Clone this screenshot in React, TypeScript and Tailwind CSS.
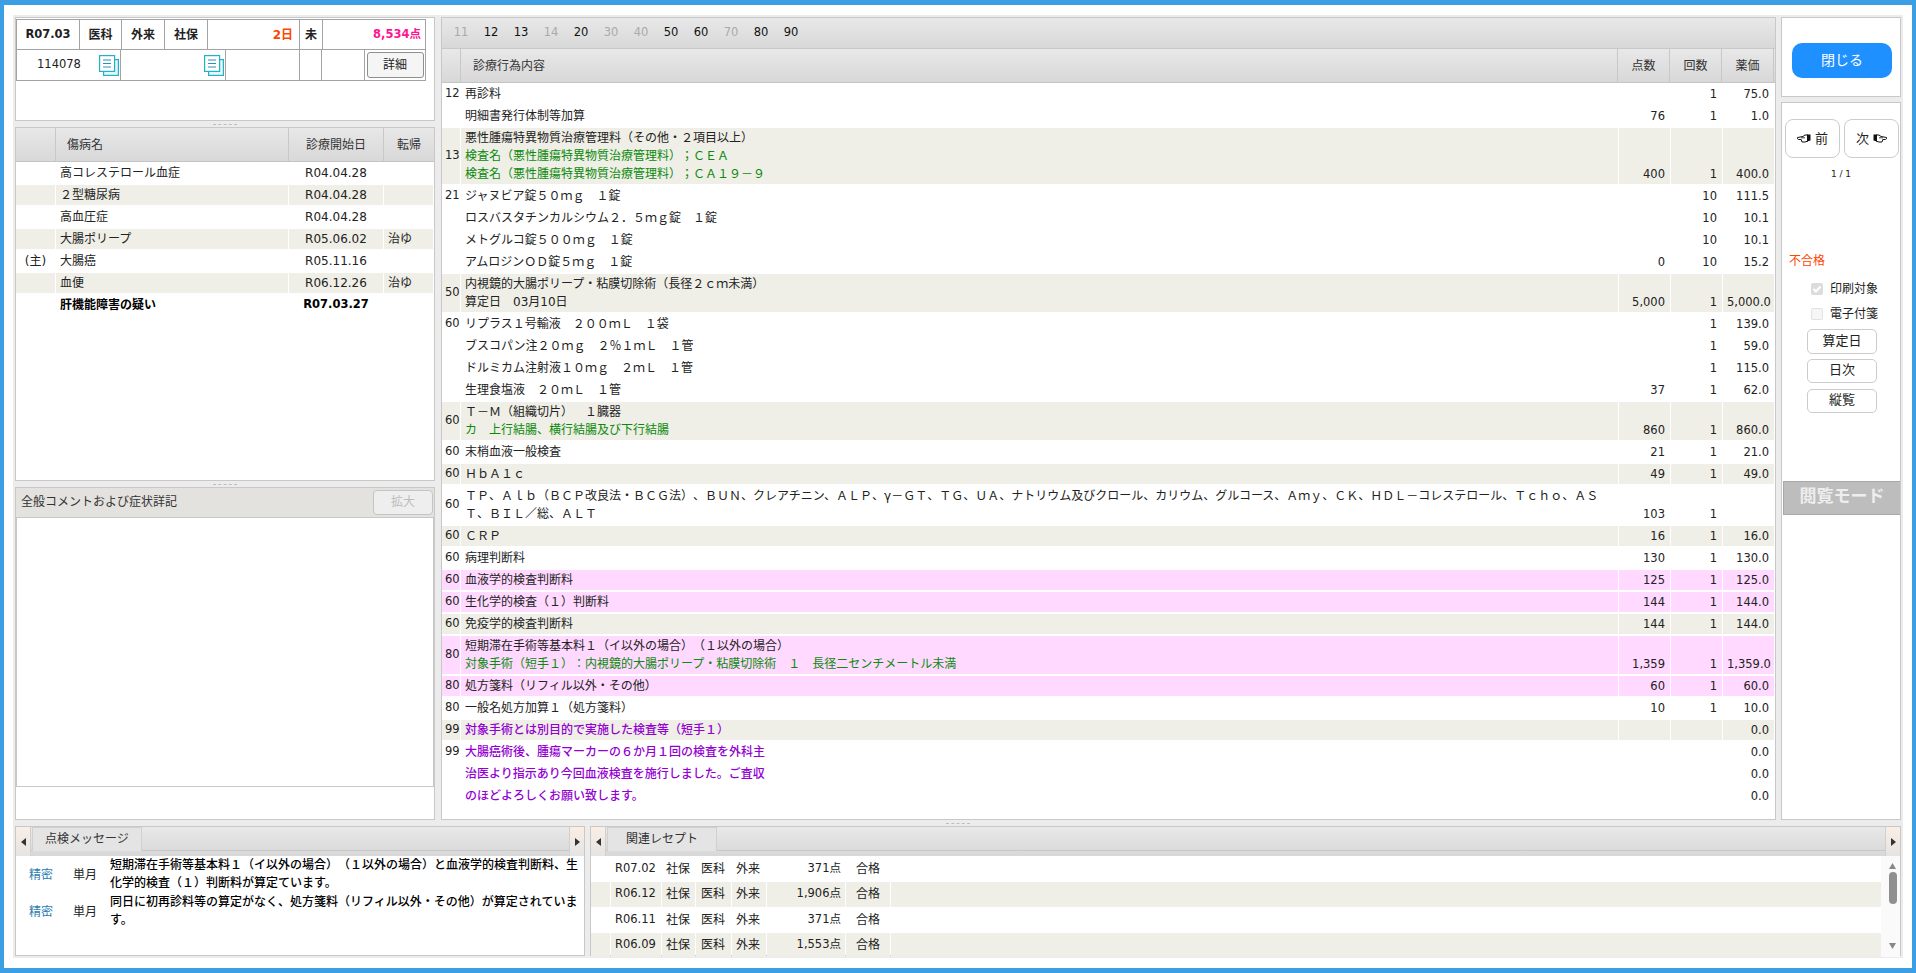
import React from "react";

type Row = {
  no?: string;
  lines: string[];
  sub?: string[];
  ten?: string;
  kai?: string;
  yaku?: string;
  tone?: "band" | "pink";
  purple?: boolean;
};

const rows: Row[] = [
  { no: "12", lines: ["再診料"], kai: "1", yaku: "75.0" },
  { lines: ["明細書発行体制等加算"], ten: "76", kai: "1", yaku: "1.0" },
  { no: "13", lines: ["悪性腫瘍特異物質治療管理料（その他・２項目以上）"], sub: ["検査名（悪性腫瘍特異物質治療管理料）；ＣＥＡ", "検査名（悪性腫瘍特異物質治療管理料）；ＣＡ１９－９"], ten: "400", kai: "1", yaku: "400.0", tone: "band" },
  { no: "21", lines: ["ジャヌビア錠５０ｍｇ　１錠"], kai: "10", yaku: "111.5" },
  { lines: ["ロスバスタチンカルシウム２．５ｍｇ錠　１錠"], kai: "10", yaku: "10.1" },
  { lines: ["メトグルコ錠５００ｍｇ　１錠"], kai: "10", yaku: "10.1" },
  { lines: ["アムロジンＯＤ錠５ｍｇ　１錠"], ten: "0", kai: "10", yaku: "15.2" },
  { no: "50", lines: ["内視鏡的大腸ポリープ・粘膜切除術（長径２ｃｍ未満）", "算定日　03月10日"], ten: "5,000", kai: "1", yaku: "5,000.0", tone: "band" },
  { no: "60", lines: ["リプラス１号輸液　２００ｍＬ　１袋"], kai: "1", yaku: "139.0" },
  { lines: ["ブスコパン注２０ｍｇ　２％１ｍＬ　１管"], kai: "1", yaku: "59.0" },
  { lines: ["ドルミカム注射液１０ｍｇ　２ｍＬ　１管"], kai: "1", yaku: "115.0" },
  { lines: ["生理食塩液　２０ｍＬ　１管"], ten: "37", kai: "1", yaku: "62.0" },
  { no: "60", lines: ["Ｔ－Ｍ（組織切片）　１臓器"], sub: ["カ　上行結腸、横行結腸及び下行結腸"], ten: "860", kai: "1", yaku: "860.0", tone: "band" },
  { no: "60", lines: ["末梢血液一般検査"], ten: "21", kai: "1", yaku: "21.0" },
  { no: "60", lines: ["ＨｂＡ１ｃ"], ten: "49", kai: "1", yaku: "49.0", tone: "band" },
  { no: "60", lines: ["ＴＰ、Ａｌｂ（ＢＣＰ改良法・ＢＣＧ法）、ＢＵＮ、クレアチニン、ＡＬＰ、γ－ＧＴ、ＴＧ、ＵＡ、ナトリウム及びクロール、カリウム、グルコース、Ａｍｙ、ＣＫ、ＨＤＬ－コレステロール、Ｔｃｈｏ、ＡＳ", "Ｔ、ＢＩＬ／総、ＡＬＴ"], ten: "103", kai: "1" },
  { no: "60", lines: ["ＣＲＰ"], ten: "16", kai: "1", yaku: "16.0", tone: "band" },
  { no: "60", lines: ["病理判断料"], ten: "130", kai: "1", yaku: "130.0" },
  { no: "60", lines: ["血液学的検査判断料"], ten: "125", kai: "1", yaku: "125.0", tone: "pink" },
  { no: "60", lines: ["生化学的検査（１）判断料"], ten: "144", kai: "1", yaku: "144.0", tone: "pink" },
  { no: "60", lines: ["免疫学的検査判断料"], ten: "144", kai: "1", yaku: "144.0", tone: "band" },
  { no: "80", lines: ["短期滞在手術等基本料１（イ以外の場合）（１以外の場合）"], sub: ["対象手術（短手１）：内視鏡的大腸ポリープ・粘膜切除術　１　長径二センチメートル未満"], ten: "1,359", kai: "1", yaku: "1,359.0", tone: "pink" },
  { no: "80", lines: ["処方箋料（リフィル以外・その他）"], ten: "60", kai: "1", yaku: "60.0", tone: "pink" },
  { no: "80", lines: ["一般名処方加算１（処方箋料）"], ten: "10", kai: "1", yaku: "10.0" },
  { no: "99", lines: ["対象手術とは別目的で実施した検査等（短手１）"], yaku: "0.0", tone: "band", purple: true },
  { no: "99", lines: ["大腸癌術後、腫瘍マーカーの６か月１回の検査を外科主"], yaku: "0.0", purple: true },
  { lines: ["治医より指示あり今回血液検査を施行しました。ご査収"], yaku: "0.0", purple: true },
  { lines: ["のほどよろしくお願い致します。"], yaku: "0.0", purple: true },
];

const diseases = [
  { mark: "", name: "高コレステロール血症", date: "R04.04.28", out: "" },
  { mark: "", name: "２型糖尿病", date: "R04.04.28", out: "" },
  { mark: "", name: "高血圧症", date: "R04.04.28", out: "" },
  { mark: "", name: "大腸ポリープ", date: "R05.06.02", out: "治ゆ" },
  { mark: "(主)", name: "大腸癌", date: "R05.11.16", out: "" },
  { mark: "", name: "血便", date: "R06.12.26", out: "治ゆ" },
  { mark: "", name: "肝機能障害の疑い", date: "R07.03.27", out: "", bold: true },
];

const tabs = [
  ["11", false], ["12", true], ["13", true], ["14", false], ["20", true], ["30", false],
  ["40", false], ["50", true], ["60", true], ["70", false], ["80", true], ["90", true],
] as const;

const related = [
  { ym: "R07.02", pts: "371点", h: "h-[26px]" },
  { ym: "R06.12", pts: "1,906点", h: "h-[25px]", band: true },
  { ym: "R06.11", pts: "371点", h: "h-[26px]" },
  { ym: "R06.09", pts: "1,553点", h: "h-[24px]", band: true },
];

const headerBg = "bg-linear-to-b from-[#e8e8e8] to-[#d8d8d8]";
const numText = "text-[11.5px] text-[#222]";

const DocIcon = () => (
  <svg width="20" height="21" viewBox="0 0 20 21" fill="none" stroke="#1fb2c9" strokeWidth="1.2">
    <rect x="4.6" y="4.6" width="14.8" height="15.8" fill="#e6f6f8" />
    <rect x="0.6" y="0.6" width="15" height="15.8" fill="#fff" />
    <path d="M4 5h8M4 8.5h8M4 12h8" stroke="#2a8fc0" strokeWidth="1" />
  </svg>
);

// pointing hand beside 前 / 次, drawn facing left and mirrored for 次
const Hand = ({ flip }: { flip?: boolean }) => (
  <svg width="14" height="9" viewBox="0 0 14 9" className={flip ? "-scale-x-100" : ""}>
    <path d="M0.5 3.5L6 2.5L8 1H11V7L8 8H5L4.2 5.5H1.5Q0 5 0.5 3.5Z" fill="#fff" stroke="#111" strokeWidth="1" />
    <path d="M4 3.8H8" stroke="#111" strokeWidth="0.8" />
    <path d="M10 0.5H13.5V6.5L10 7.5Z" fill="#111" />
  </svg>
);

const Arrow = ({ dir }: { dir: "l" | "r" }) => (
  <svg width="5" height="8" viewBox="0 0 5 8" fill="#333">
    <path d={dir === "l" ? "M5 0v8L0 4z" : "M0 0v8l5-4z"} />
  </svg>
);

const Check = () => (
  <svg width="12" height="12" viewBox="0 0 12 12" fill="none" stroke="#fff" strokeWidth="2">
    <path d="M2.5 6l2.5 2.5 4.5-5" />
  </svg>
);

const Splitter = ({ w }: { w: string }) => (
  <div className="h-[6px] flex items-center justify-center">
    <div className={`${w} border-t border-dashed border-[#bdbdbd]`} />
  </div>
);

const TopCard = () => (
  <div className="h-[104px] bg-white border border-[#c8c8c8]">
    <div className="w-[410px] h-[62px] mt-px border border-[#a3a3a3] text-[12px] text-[#222]">
      <div className="flex h-[30px] border-b border-[#a3a3a3] font-bold items-center">
        <div className="w-[63px] h-full flex items-center justify-center border-r border-[#a3a3a3] text-[11.5px]">R07.03</div>
        <div className="w-[42px] h-full flex items-center justify-center border-r border-[#a3a3a3]">医科</div>
        <div className="w-[43px] h-full flex items-center justify-center border-r border-[#a3a3a3]">外来</div>
        <div className="w-[43px] h-full flex items-center justify-center border-r border-[#a3a3a3]">社保</div>
        <div className="w-[92px] h-full flex items-center justify-end pr-1.5 border-r border-[#a3a3a3] text-[#ff4500] text-[12px]">2日</div>
        <div className="w-[23px] h-full flex items-center justify-center border-r border-[#a3a3a3]">未</div>
        <div className="flex-1 h-full flex items-center justify-end pr-1 text-[#ff1493] text-[11.5px]">8,534点</div>
      </div>
      <div className="flex h-[30px] items-center">
        <div className="w-[104px] h-full flex items-center border-r border-[#a3a3a3]">
          <span className="pl-[20px] text-[11.5px]">114078</span>
          <span className="ml-auto mr-[1px]"><DocIcon /></span>
        </div>
        <div className="w-[105px] h-full flex items-center justify-end pr-[1px] border-r border-[#a3a3a3]"><DocIcon /></div>
        <div className="w-[74px] h-full border-r border-[#a3a3a3]" />
        <div className="w-[22px] h-full border-r border-[#a3a3a3]" />
        <div className="w-[43px] h-full border-r border-[#a3a3a3]" />
        <div className="flex-1 h-full flex items-center justify-center">
          <button className="w-[57px] h-[26px] border border-[#8f8f8f] rounded-[3px] bg-[#f5f5f5] text-[12px] text-[#222]">詳細</button>
        </div>
      </div>
    </div>
  </div>
);

const DiseasePanel = () => (
  <div className="h-[354px] bg-white border border-[#c8c8c8]">
    <div className={`flex h-[34px] border-b border-[#c4c4c4] text-[12px] text-[#333] ${headerBg}`}>
      <div className="w-[40px] border-r border-[#c8c8c8]" />
      <div className="w-[233px] flex items-center pl-[11px] border-r border-[#c8c8c8]">傷病名</div>
      <div className="w-[95px] flex items-center justify-center border-r border-[#c8c8c8]">診療開始日</div>
      <div className="flex-1 flex items-center justify-center">転帰</div>
    </div>
    {diseases.map((d, i) => (
      <div key={i} className={`flex h-[22px] gap-px text-[12px] text-[#222] ${d.bold ? "font-bold text-black" : ""}`}>
        <div className={`w-[39px] my-px flex items-center justify-center ${i % 2 ? "bg-[#efefe7]" : ""}`}>{d.mark}</div>
        <div className={`w-[232px] my-px flex items-center pl-[4px] ${i % 2 ? "bg-[#efefe7]" : ""}`}>{d.name}</div>
        <div className={`w-[94px] my-px flex items-center justify-center ${i % 2 ? "bg-[#efefe7]" : ""} ${d.bold ? "text-[11.5px]" : ""}`}>{d.date}</div>
        <div className={`flex-1 my-px flex items-center pl-[4px] mr-px ${i % 2 ? "bg-[#efefe7]" : ""}`}>{d.out}</div>
      </div>
    ))}
  </div>
);

const CommentPanel = () => (
  <div className="h-[333px] bg-white border border-[#c8c8c8] flex flex-col">
    <div className="h-[29px] bg-[#e3e2df] flex items-center justify-between pl-[5px] pr-[1px] pb-px text-[12px] text-[#333]">
      <span>全般コメントおよび症状詳記</span>
      <button className="w-[60px] h-[25px] border border-[#c4c4c4] rounded-[4px] bg-[#eeeeee] text-[#bdbdbd]">拡大</button>
    </div>
    <div className="h-[270px] border border-[#c8c8c8]" />
  </div>
);

const MainPanel = () => (
  <div className="w-[1335px] bg-white border border-[#c8c8c8] flex flex-col">
    <div className={`h-[31px] flex items-center pl-[4px] text-[11.5px] border-b border-[#c8c8c8] ${headerBg}`}>
      {tabs.map(([label, on]) => (
        <span key={label} className={`w-[30px] text-center ${on ? "text-[#111]" : "text-[#aaaaaa]"}`}>{label}</span>
      ))}
    </div>
    <div className={`flex h-[34px] border-b border-[#c4c4c4] text-[12px] text-[#333] ${headerBg}`}>
      <div className="w-[19px] border-r border-[#c8c8c8]" />
      <div className="flex-1 flex items-center pl-[12px] border-r border-[#c8c8c8]">診療行為内容</div>
      <div className="w-[52px] flex items-center justify-center border-r border-[#c8c8c8]">点数</div>
      <div className="w-[52px] flex items-center justify-center border-r border-[#c8c8c8]">回数</div>
      <div className="w-[52px] flex items-center justify-center mr-px border-r border-[#c8c8c8]">薬価</div>
    </div>
    {rows.map((r, i) => {
      const bg = r.tone === "band" ? "bg-[#efefe7]" : r.tone === "pink" ? "bg-[#ffd9ff]" : "";
      return (
        <div key={i} className="flex gap-px pr-px">
          <div className={`w-[18px] my-px pl-[3px] flex items-center text-[11.5px] text-[#222] ${bg}`}>{r.no}</div>
          <div className={`flex-1 my-px py-px pl-[4px] text-[12px] leading-[18px] whitespace-nowrap overflow-hidden ${bg} ${r.purple ? "text-[#9400d3] font-medium" : "text-[#222]"}`}>
            {r.lines.map((t, j) => <div key={j}>{t}</div>)}
            {r.sub?.map((t, j) => <div key={j} className="text-[#0a8a0a]">{t}</div>)}
          </div>
          <div className={`w-[51px] my-px py-px pr-[5px] leading-[18px] flex items-end justify-end ${numText} ${bg}`}>{r.ten}</div>
          <div className={`w-[51px] my-px py-px pr-[5px] leading-[18px] flex items-end justify-end ${numText} ${bg}`}>{r.kai}</div>
          <div className={`w-[51px] my-px py-px pl-[4px] pr-[5px] leading-[18px] flex flex-col justify-end text-right whitespace-nowrap ${numText} ${bg}`}>{r.yaku}</div>
        </div>
      );
    })}
  </div>
);

const SidePanel = () => (
  <div className="w-[120px] flex flex-col">
    <div className="h-[80px] bg-white border border-[#c8c8c8] pt-[25px] pl-[10px]">
      <button className="w-[100px] h-[35px] rounded-[10px] bg-[#1e90ff] text-white text-[14px]">閉じる</button>
    </div>
    <div className="mt-[5px] flex-1 bg-white border border-[#c8c8c8] pt-[16px] text-[12px] text-[#222]">
      <div className="flex gap-[4px] pl-[3px]">
        <button className="w-[55px] h-[39px] flex items-center justify-center gap-1 border border-[#cccccc] rounded-[8px] text-[13px]"><Hand />前</button>
        <button className="w-[55px] h-[39px] flex items-center justify-center gap-1 border border-[#cccccc] rounded-[8px] text-[13px]">次<Hand flip /></button>
      </div>
      <div className="mt-[9px] h-[16px] flex items-center justify-center text-[9px]">1 / 1</div>
      <div className="mt-[69px] h-[18px] leading-[18px] pl-[7px] text-[#ff4500]">不合格</div>
      <div className="mt-[10px] h-[18px] flex items-center pl-[29px]">
        <div className="w-[12px] h-[12px] rounded-[2px] bg-[#dcdcdc]"><Check /></div>
        <span className="ml-[7px]">印刷対象</span>
      </div>
      <div className="mt-[7px] h-[18px] flex items-center pl-[29px]">
        <div className="w-[12px] h-[12px] rounded-[2px] bg-[#f6f6f6] border border-[#e2e2e2]" />
        <span className="ml-[7px]">電子付箋</span>
      </div>
      <button className="block mt-[6px] ml-[25px] w-[70px] h-[25px] pb-[2px] border border-[#cccccc] rounded-[5px] text-[13px]">算定日</button>
      <button className="block mt-[5px] ml-[25px] w-[70px] h-[24px] pb-[2px] border border-[#cccccc] rounded-[5px] text-[13px]">日次</button>
      <button className="block mt-[6px] ml-[25px] w-[70px] h-[24px] pb-[2px] border border-[#cccccc] rounded-[5px] text-[13px]">縦覧</button>
      <div className="mt-[68px] ml-px h-[34px] pb-[3px] flex items-center justify-center bg-[#bdbdbd] border-t border-l border-b border-[#a8a8a8] text-[#eeeeee] text-[17px] font-bold">閲覧モード</div>
    </div>
  </div>
);

const TabBar = ({ label, tabW }: { label: string; tabW: string }) => (
  <div className={`flex h-[29px] ${headerBg}`}>
    <div className="w-[15px] flex items-center justify-center bg-linear-to-b from-[#fbeee4] to-[#e4e4e4] border-r border-[#d0d0d0]"><Arrow dir="l" /></div>
    <div className="flex-1 h-[24px] flex border-b border-[#c8c8c8]">
      <div className={`${tabW} ml-px h-[24px] pb-[2px] flex items-center justify-center border-x border-t border-[#d0d0d0] bg-[#e4e4e4] text-[12px] text-[#333]`}>{label}</div>
    </div>
    <div className="w-[15px] flex items-center justify-center bg-linear-to-b from-[#fbeee4] to-[#e4e4e4] border-l border-[#d0d0d0]"><Arrow dir="r" /></div>
  </div>
);

const CheckPanel = () => (
  <div className="w-[570px] h-[130px] bg-white border border-[#c8c8c8]">
    <TabBar label="点検メッセージ" tabW="w-[110px]" />
    <div className="pl-[13px] text-[12px] leading-[18px]">
      <div className="flex h-[37px]">
        <div className="w-[44px] self-center text-[#2b7cb0]">精密</div>
        <div className="w-[37px] self-center text-[#222]">単月</div>
        <div className="w-[470px] font-medium text-black">短期滞在手術等基本料１（イ以外の場合）（１以外の場合）と血液学的検査判断料、生化学的検査（１）判断料が算定ています。</div>
      </div>
      <div className="flex h-[37px]">
        <div className="w-[44px] self-center text-[#2b7cb0]">精密</div>
        <div className="w-[37px] self-center text-[#222]">単月</div>
        <div className="w-[470px] font-medium text-black">同日に初再診料等の算定がなく、処方箋料（リフィル以外・その他）が算定されています。</div>
      </div>
    </div>
  </div>
);

const RelatedPanel = () => (
  <div className="flex-1 h-[130px] bg-white border border-[#c8c8c8]">
    <TabBar label="関連レセプト" tabW="w-[110px]" />
    <div className="flex">
      <div className="flex-1">
        {related.map((r) => {
          const bg = r.band ? "bg-[#efefe7]" : "";
          return (
            <div key={r.ym} className={`flex gap-px text-[12px] text-[#222] ${r.h}`}>
              <div className={`w-[19px] ${bg}`} />
              <div className={`w-[50px] pl-[4px] pb-px flex items-center text-[11.5px] ${bg}`}>{r.ym}</div>
              <div className={`w-[33px] pl-[4px] pb-px flex items-center ${bg}`}>社保</div>
              <div className={`w-[35px] pl-[5px] pb-px flex items-center ${bg}`}>医科</div>
              <div className={`w-[34px] pl-[4px] pb-px flex items-center ${bg}`}>外来</div>
              <div className={`w-[78px] pr-[4px] pb-px flex items-center justify-end text-[11.5px] ${bg}`}>{r.pts}</div>
              <div className={`w-[44px] pl-[10px] pb-px flex items-center ${bg}`}>合格</div>
              <div className={`flex-1 ${bg}`} />
            </div>
          );
        })}
      </div>
      <div className="w-[19px] bg-[#fafafa] flex flex-col items-center pl-[4px] pt-[7px]">
        <svg width="7" height="6" viewBox="0 0 7 6" fill="#888888"><path d="M3.5 0L7 6H0z" /></svg>
        <div className="mt-[3px] w-[8px] h-[32px] rounded-[4px] bg-[#8f8f8f]" />
        <svg className="mt-[39px]" width="7" height="6" viewBox="0 0 7 6" fill="#888888"><path d="M3.5 6L7 0H0z" /></svg>
      </div>
    </div>
  </div>
);

export default function App() {
  return (
    <div lang="ja" className="w-[1916px] h-[973px] overflow-hidden bg-white border-x-4 border-t-[5px] border-b-[5px] border-[#3d9fe3] px-[9px] py-[10px] [text-spacing-trim:space-all] font-['DejaVu_Sans','Noto_Sans_CJK_JP',sans-serif]">
      <div className="h-full bg-[#ececec] p-[2px]">
        <div className="flex h-[803px] gap-[5px]">
          <div className="w-[420px] mr-px flex flex-col">
            <TopCard />
            <Splitter w="w-[24px]" />
            <DiseasePanel />
            <Splitter w="w-[24px]" />
            <CommentPanel />
          </div>
          <MainPanel />
          <SidePanel />
        </div>
        <Splitter w="w-[24px]" />
        <div className="flex gap-[5px]">
          <CheckPanel />
          <RelatedPanel />
        </div>
      </div>
    </div>
  );
}
